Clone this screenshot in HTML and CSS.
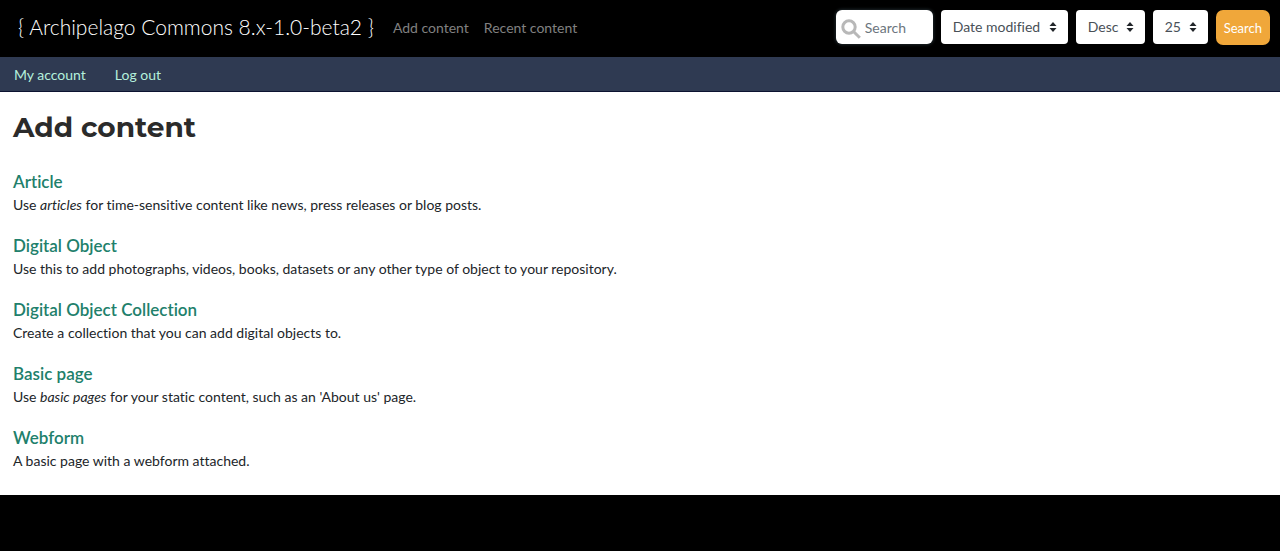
FILE: index.html
```html
<!DOCTYPE html>
<html lang="en">
<head>
<meta charset="utf-8">
<meta name="viewport" content="width=device-width, initial-scale=1">
<title>Add content</title>
<link rel="stylesheet" href="styles.css">
</head>
<body>
<header class="navbar">
  <a class="brand" href="#">{ Archipelago Commons 8.x-1.0-beta2 }</a>
  <nav class="main-nav" aria-label="Main">
    <a href="#">Add content</a>
    <a href="#">Recent content</a>
  </nav>
  <form class="search-form">
    <div class="search-box">
      <svg class="search-icon" viewBox="0 0 20 20" aria-hidden="true"><circle cx="8" cy="8" r="6.2"/><path d="M12.5 12.5 18.8 18.8"/></svg>
      <input type="search" aria-label="Search terms" placeholder="Search">
    </div>
    <div class="select-box select-sort">
      <select aria-label="Sort by"><option>Date modified</option></select>
      <svg class="caret" viewBox="0 0 8 10" aria-hidden="true"><path d="M4 0 7.5 4h-7zM4 10 .5 6h7z"/></svg>
    </div>
    <div class="select-box select-order">
      <select aria-label="Order"><option>Desc</option></select>
      <svg class="caret" viewBox="0 0 8 10" aria-hidden="true"><path d="M4 0 7.5 4h-7zM4 10 .5 6h7z"/></svg>
    </div>
    <div class="select-box select-count">
      <select aria-label="Items per page"><option>25</option></select>
      <svg class="caret" viewBox="0 0 8 10" aria-hidden="true"><path d="M4 0 7.5 4h-7zM4 10 .5 6h7z"/></svg>
    </div>
    <button class="search-button" type="submit">Search</button>
  </form>
</header>
<nav class="account-nav" aria-label="Account">
  <a href="#">My account</a>
  <a href="#">Log out</a>
</nav>
<main class="content">
  <h1>Add content</h1>
  <dl class="type-list">
    <div class="type"><dt><a href="#">Article</a></dt><dd>Use <em>articles</em> for time-sensitive content like news, press releases or blog posts.</dd></div>
    <div class="type"><dt><a href="#">Digital Object</a></dt><dd>Use this to add photographs, videos, books, datasets or any other type of object to your repository.</dd></div>
    <div class="type"><dt><a href="#">Digital Object Collection</a></dt><dd>Create a collection that you can add digital objects to.</dd></div>
    <div class="type"><dt><a href="#">Basic page</a></dt><dd>Use <em>basic pages</em> for your static content, such as an 'About us' page.</dd></div>
    <div class="type"><dt><a href="#">Webform</a></dt><dd>A basic page with a webform attached.</dd></div>
  </dl>
</main>
</body>
</html>
```
FILE: styles.css
```css
* {
  box-sizing: border-box;
}

body {
  margin: 0;
  background: #000;
  color: #212529;
  font: 400 14px/20px Lato, "Liberation Sans", sans-serif;
  font-variant-ligatures: none;
}

a {
  text-decoration: none;
}

.navbar {
  display: flex;
  align-items: center;
  min-height: 57px;
  padding: 10px 10px 12px 18px;
  background: #000;
}

.brand {
  margin-right: 19px;
  color: #fff;
  font-size: 21px;
  font-weight: 300;
  line-height: 32px;
  padding-bottom: 2px;
}

.main-nav {
  display: flex;
  gap: 15px;
}

.main-nav a {
  color: #808080;
}

.search-form {
  display: flex;
  gap: 8px;
  margin-left: auto;
}

.search-box,
.select-box {
  position: relative;
  height: 34px;
}

.search-box {
  width: 97px;
}

.search-box input,
.select-box select {
  width: 100%;
  height: 100%;
  border: 0;
  border-radius: 4px;
  background: #fff;
  color: #495057;
  font: inherit;
  appearance: none;
}

.search-box input {
  padding: 0 8px 0 29px;
  border-radius: 6px;
  box-shadow: 0 0 3px 1px #1c2428;
}

.search-box input::placeholder {
  color: #6c757d;
  opacity: 1;
}

.search-icon {
  position: absolute;
  top: 9px;
  left: 5px;
  width: 20px;
  height: 20px;
  fill: none;
  stroke: #b8b8b8;
  stroke-width: 3;
}

.select-box select {
  padding: 0 24px 0 12px;
}

.caret {
  position: absolute;
  top: 12px;
  right: 11px;
  width: 8px;
  height: 10px;
  fill: #212529;
  pointer-events: none;
}

.select-sort {
  width: 127px;
}

.select-order {
  width: 69px;
}

.select-count {
  width: 55px;
}

.search-button {
  height: 35px;
  padding: 0 8px;
  border: 0;
  border-radius: 7px;
  background: #f0a73a;
  color: #fff;
  font: inherit;
  font-size: 13px;
}

.account-nav {
  display: flex;
  gap: 29px;
  padding: 8px 14px 6px;
  border-bottom: 1px solid #0c1230;
  background: #2f3a52;
}

.account-nav a {
  color: #b5f0dc;
}

.content {
  padding: 16px 13px 23px;
  background: #fff;
}

h1 {
  margin: 0 0 24px;
  color: #2b2b2b;
  font: 700 28px/38px Montserrat, Inter, sans-serif;
}

.type-list {
  display: grid;
  gap: 18px;
  margin: 0;
}

.type dt {
  font-size: 17px;
  font-weight: 600;
  line-height: 24px;
}

.type dt a {
  color: #21806b;
}

.type dd {
  margin: 0;
  line-height: 22px;
}
```
